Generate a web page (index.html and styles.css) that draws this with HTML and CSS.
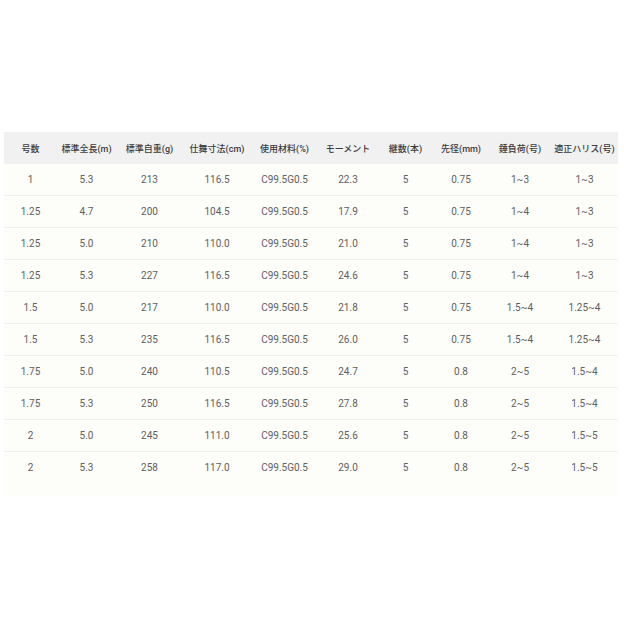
FILE: index.html
```html
<!DOCTYPE html>
<html lang="ja">
<head>
<meta charset="utf-8">
<link rel="stylesheet" href="styles.css">
</head>
<body>
<div class="page">
  <div class="wrap">
    <table class="spec">
      <colgroup>
        <col class="c1"><col class="c2"><col class="c3"><col class="c4"><col class="c5">
        <col class="c6"><col class="c7"><col class="c8"><col class="c9"><col class="c10">
      </colgroup>
      <thead>
        <tr><th>号数</th><th>標準全長(m)</th><th>標準自重(g)</th><th>仕舞寸法(cm)</th><th>使用材料(%)</th><th>モーメント</th><th>継数(本)</th><th>先径(mm)</th><th>錘負荷(号)</th><th>適正ハリス(号)</th></tr>
      </thead>
      <tbody>
        <tr><td>1</td><td>5.3</td><td>213</td><td>116.5</td><td>C99.5G0.5</td><td>22.3</td><td>5</td><td>0.75</td><td>1~3</td><td>1~3</td></tr>
        <tr><td>1.25</td><td>4.7</td><td>200</td><td>104.5</td><td>C99.5G0.5</td><td>17.9</td><td>5</td><td>0.75</td><td>1~4</td><td>1~3</td></tr>
        <tr><td>1.25</td><td>5.0</td><td>210</td><td>110.0</td><td>C99.5G0.5</td><td>21.0</td><td>5</td><td>0.75</td><td>1~4</td><td>1~3</td></tr>
        <tr><td>1.25</td><td>5.3</td><td>227</td><td>116.5</td><td>C99.5G0.5</td><td>24.6</td><td>5</td><td>0.75</td><td>1~4</td><td>1~3</td></tr>
        <tr><td>1.5</td><td>5.0</td><td>217</td><td>110.0</td><td>C99.5G0.5</td><td>21.8</td><td>5</td><td>0.75</td><td>1.5~4</td><td>1.25~4</td></tr>
        <tr><td>1.5</td><td>5.3</td><td>235</td><td>116.5</td><td>C99.5G0.5</td><td>26.0</td><td>5</td><td>0.75</td><td>1.5~4</td><td>1.25~4</td></tr>
        <tr><td>1.75</td><td>5.0</td><td>240</td><td>110.5</td><td>C99.5G0.5</td><td>24.7</td><td>5</td><td>0.8</td><td>2~5</td><td>1.5~4</td></tr>
        <tr><td>1.75</td><td>5.3</td><td>250</td><td>116.5</td><td>C99.5G0.5</td><td>27.8</td><td>5</td><td>0.8</td><td>2~5</td><td>1.5~4</td></tr>
        <tr><td>2</td><td>5.0</td><td>245</td><td>111.0</td><td>C99.5G0.5</td><td>25.6</td><td>5</td><td>0.8</td><td>2~5</td><td>1.5~5</td></tr>
        <tr class="last"><td>2</td><td>5.3</td><td>258</td><td>117.0</td><td>C99.5G0.5</td><td>29.0</td><td>5</td><td>0.8</td><td>2~5</td><td>1.5~5</td></tr>
      </tbody>
    </table>
  </div>
</div>
</body>
</html>
```
FILE: styles.css
```css
html, body {
  margin: 0;
  padding: 0;
  background: #ffffff;
}
.page {
  width: 624px;
  height: 624px;
  padding-top: 132px;
  box-sizing: border-box;
  font-family: Roboto, "Noto Sans CJK JP", sans-serif;
}
.wrap {
  margin: 0 6px 0 4px;
  background: #fdfdfa;
  padding-bottom: 14px;
}
.spec {
  width: 614px;
  border-collapse: collapse;
  table-layout: fixed;
}
.c1 { width: 53px; }
.c2 { width: 59px; }
.c3 { width: 67px; }
.c4 { width: 68px; }
.c5 { width: 67px; }
.c6 { width: 60px; }
.c7 { width: 55px; }
.c8 { width: 56px; }
.c9 { width: 62px; }
.c10 { width: 67px; }
.spec th {
  background: #f1f1f1;
  height: 32px;
  padding: 0;
  font-size: 9px;
  font-weight: 500;
  color: #3c3c3c;
  text-align: center;
  white-space: nowrap;
}
.spec td {
  height: 31px;
  padding: 0;
  font-size: 10px;
  color: #606060;
  text-align: center;
  border-bottom: 1px solid #f0f0ee;
  white-space: nowrap;
}
.spec tr.last td {
  border-bottom: none;
}
```
